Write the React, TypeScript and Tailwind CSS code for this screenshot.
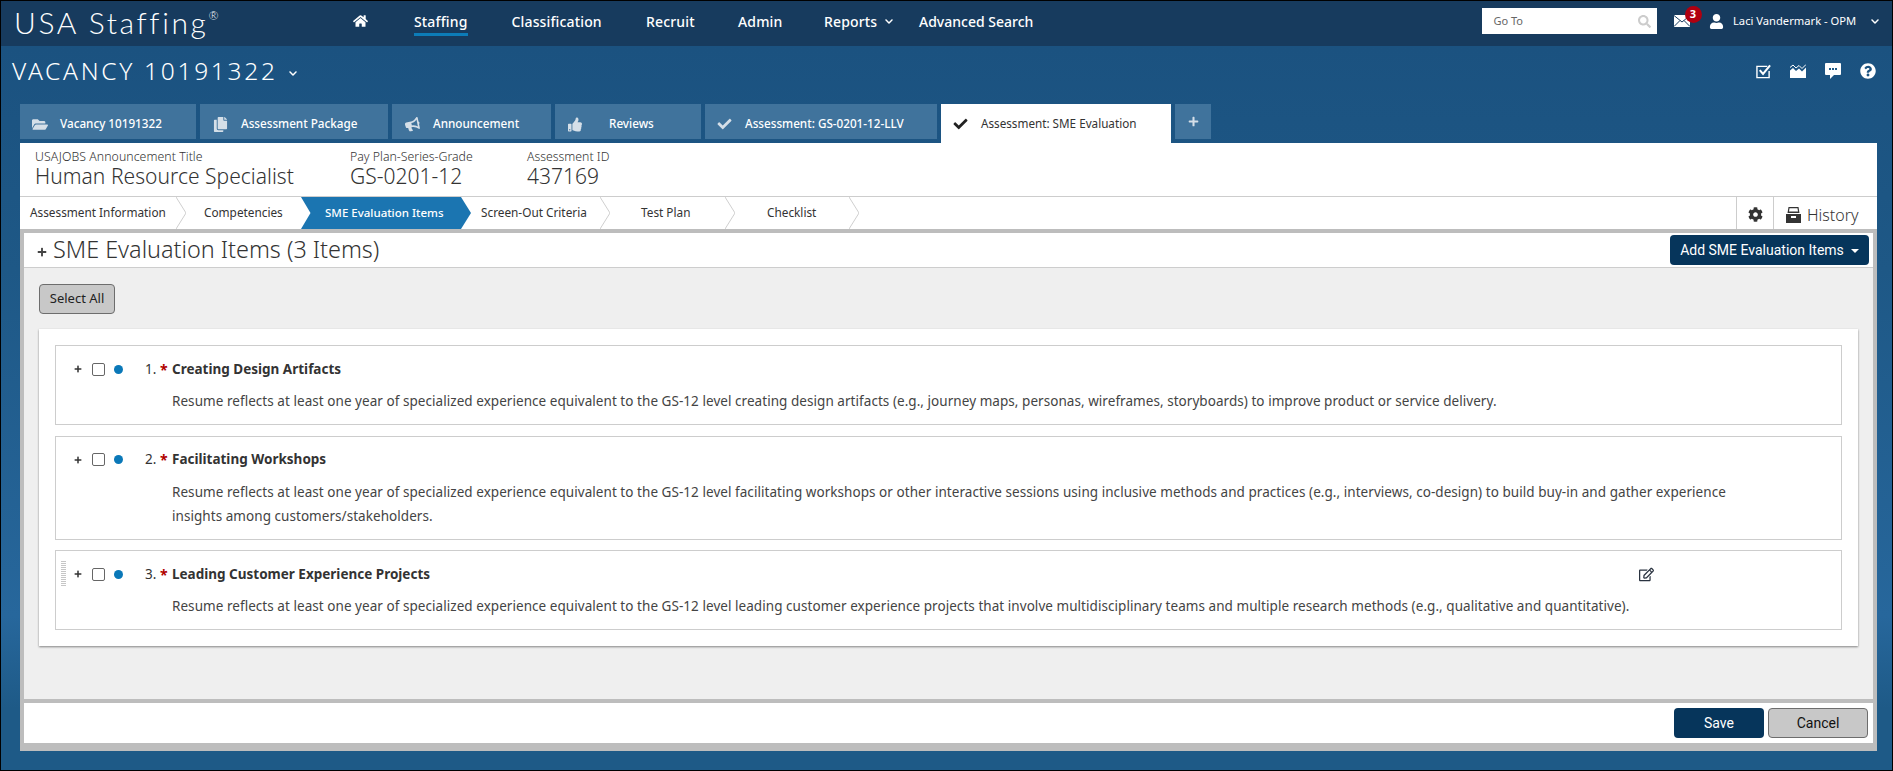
import type { ReactNode } from "react";
import {
  FaBullhorn,
  FaCheck,
  FaCog,
  FaCopy,
  FaFolderOpen,
  FaHome,
  FaPlus,
  FaQuestionCircle,
  FaRegEdit,
  FaSearch,
  FaThumbsUp,
  FaUser,
  FaChevronDown,
} from "react-icons/fa";

type Tab = {
  label: string;
  icon: ReactNode;
  width: string;
  iconBox: string;
  active?: boolean;
};

const tabs: Tab[] = [
  { label: "Vacancy 10191322", icon: <FaFolderOpen className="h-[15px] w-[16px]" />, width: "w-[176px]", iconBox: "w-[40px] pl-[12px]" },
  { label: "Assessment Package", icon: <FaCopy className="h-[15px] w-[15px]" />, width: "w-[188px]", iconBox: "w-[41px] pl-[13px]" },
  { label: "Announcement", icon: <FaBullhorn className="h-[13px] w-[15px] -rotate-12" />, width: "w-[159px]", iconBox: "w-[41px] pl-[13px]" },
  { label: "Reviews", icon: <FaThumbsUp className="h-[15px] w-[14px]" />, width: "w-[146px]", iconBox: "w-[54px] pl-[13px]" },
  { label: "Assessment: GS-0201-12-LLV", icon: <FaCheck className="h-[14px] w-[15px]" />, width: "w-[232px]", iconBox: "w-[40px] pl-[12px]" },
  { label: "Assessment: SME Evaluation", icon: <FaCheck className="h-[14px] w-[15px]" />, width: "w-[230px]", iconBox: "w-[40px] pl-[12px]", active: true },
];

const navItems = [
  { label: "Classification", width: "w-[134.5px]" },
  { label: "Recruit", width: "w-[92px]" },
  { label: "Admin", width: "w-[86px]" },
];

const smeItems = [
  {
    number: "1.",
    title: "Creating Design Artifacts",
    body: "Resume reflects at least one year of specialized experience equivalent to the GS-12 level creating design artifacts (e.g., journey maps, personas, wireframes, storyboards) to improve product or service delivery.",
  },
  {
    number: "2.",
    title: "Facilitating Workshops",
    body: "Resume reflects at least one year of specialized experience equivalent to the GS-12 level facilitating workshops or other interactive sessions using inclusive methods and practices (e.g., interviews, co-design) to build buy-in and gather experience insights among customers/stakeholders.",
  },
  {
    number: "3.",
    title: "Leading Customer Experience Projects",
    body: "Resume reflects at least one year of specialized experience equivalent to the GS-12 level leading customer experience projects that involve multidisciplinary teams and multiple research methods (e.g., qualitative and quantitative).",
    hovered: true,
  },
];

function Chevron() {
  return (
    <svg viewBox="0 0 10 32" className="absolute -right-[10px] top-0 h-[32px] w-[10px]" fill="none" stroke="#cfcfcf">
      <path d="M0 0 L10 16 L0 32" />
    </svg>
  );
}

function Step({ label, className, chevron = true }: { label: string; className: string; chevron?: boolean }) {
  return (
    <div className={`relative flex h-full shrink-0 items-center whitespace-nowrap text-[#333] ${className}`}>
      {label}
      {chevron && <Chevron />}
    </div>
  );
}

function SmeItem({ number, title, body, hovered }: { number: string; title: string; body: string; hovered?: boolean }) {
  return (
    <div className="relative border border-[#cdcdcd] pb-[11px] pt-[13px]">
      {hovered && (
        <div className="absolute left-[5px] top-[10px] h-[26px] w-[5px] bg-[linear-gradient(#c6c6c6_50%,transparent_50%)] bg-[length:100%_2px]" />
      )}
      <div className="flex h-[20px] items-center">
        <div className="flex w-[116px] shrink-0 items-center pl-[18px]">
          <FaPlus className="h-[8px] w-[8px] shrink-0 text-[#333]" />
          <span className="ml-[10px] h-[13px] w-[13px] shrink-0 rounded-[2px] border border-[#666] bg-white" />
          <span className="ml-[9px] h-[9px] w-[9px] shrink-0 rounded-full bg-[#0a78b8]" />
          <span className="ml-[22px] w-[15px] shrink-0 text-[13.5px] text-[#333]">{number}</span>
          <span className="w-[12px] shrink-0 text-[14px] font-bold text-[#b00000]">*</span>
        </div>
        <span className="text-[13.5px] font-bold text-[#333]">{title}</span>
        {hovered && <FaRegEdit className="ml-auto mr-[187px] h-[15px] w-[15px] text-[#2a3340]" />}
      </div>
      <p className="ml-[116px] mt-[10px] max-w-[1580px] text-[13.5px] leading-[24px] tracking-[0.05px] text-[#444]">{body}</p>
    </div>
  );
}

export default function App() {
  return (
    <div className="flex h-[771px] w-full flex-col overflow-hidden border border-black bg-[linear-gradient(#1b5280_6%,#1e5886_35%,#27679c_80%,#1e5a87_92%)] font-['Noto_Sans',sans-serif]">
      {/* top bar */}
      <header className="flex h-[45px] shrink-0 items-center bg-[#173b5e] pb-[5px] pr-[12px] text-white">
        <div className="mt-[2px] w-[352px] shrink-0 whitespace-nowrap pl-[13px] font-['Lato',sans-serif] text-[30px] font-light leading-none tracking-[2.6px]">
          USA Staffing
          <sup className="-top-[14px] text-[12px] tracking-normal">®</sup>
        </div>
        <FaHome className="mr-[46px] h-[14px] w-[15px] shrink-0" />
        <div className="relative w-[97.5px] shrink-0 text-[14px] font-medium tracking-[0.15px]">
          Staffing
          <span className="absolute -bottom-[4px] left-0 h-[3px] w-[54px] bg-[#0c7cb8]" />
        </div>
        {navItems.map((item) => (
          <div key={item.label} className={`shrink-0 text-[14px] font-medium tracking-[0.15px] ${item.width}`}>
            {item.label}
          </div>
        ))}
        <div className="flex w-[95px] shrink-0 items-center text-[14px] font-medium tracking-[0.15px]">
          Reports
          <FaChevronDown className="ml-[7px] h-[9px] w-[10px]" />
        </div>
        <div className="shrink-0 text-[14px] font-medium">Advanced Search</div>

        <div className="ml-auto flex h-[26px] w-[175px] shrink-0 items-center justify-between bg-white pl-[12px] pr-[6px] text-[11px] text-[#666]">
          Go To
          <FaSearch className="h-[13px] w-[13px] text-[#ccc]" />
        </div>
        <div className="relative ml-[17px] w-[35.5px] shrink-0">
          <svg viewBox="0 0 16 12" className="h-[12px] w-[16px]">
            <rect width="16" height="12" fill="#fff" />
            <path d="M0 .5 L8 7 L16 .5 M0 11.5 L6 5.5 M16 11.5 L10 5.5" fill="none" stroke="#173b5e" strokeWidth="1" />
          </svg>
          <span className="absolute -top-[9px] left-[11px] flex h-[17px] w-[17px] items-center justify-center rounded-full bg-[#b00010] text-[11px] font-bold">
            3
          </span>
        </div>
        <FaUser className="mr-[9px] h-[15px] w-[15px] shrink-0" />
        <div className="w-[137px] shrink-0 whitespace-nowrap text-[11.2px]">Laci Vandermark - OPM</div>
        <FaChevronDown className="h-[9px] w-[10px] shrink-0" />
      </header>

      {/* vacancy title */}
      <div className="flex h-[58px] shrink-0 items-start justify-between pl-[11px] pr-[16px] pt-[11px] text-white">
        <div className="flex h-[28px] items-center">
          <span className="text-[24.5px] font-light leading-[28px] tracking-[2.7px]">VACANCY 10191322</span>
          <FaChevronDown className="ml-[10px] mt-[5px] h-[9px] w-[10px]" />
        </div>
        <div className="flex h-[28px] items-center gap-[19px]">
          <svg viewBox="0 0 16 15" className="h-[15px] w-[15px]" fill="none" stroke="#fff">
            <path d="M14 7 V14 H1 V2 H12" strokeWidth="1.5" />
            <path d="M4 6 L7.5 10 L15 1" strokeWidth="2.2" />
          </svg>
          <svg viewBox="0 0 16 14" className="h-[14px] w-[16px]" fill="#fff">
            <path d="M0 14 V6.5 L3 4 L6 7 L9 4.5 L12 7.5 L16 3.5 V14 Z" />
            <path d="M0 3.5 L3 1 L6 4 L9 1.5 L12 4.5 L16 .5" fill="none" stroke="#fff" />
          </svg>
          <svg viewBox="0 0 16 16" className="h-[16px] w-[16px]">
            <path d="M1 0 H15 Q16 0 16 1 V11 Q16 12 15 12 H9 L5 16 V12 H1 Q0 12 0 11 V1 Q0 0 1 0 Z" fill="#fff" />
            <path d="M4 6 h2 M7 6 h2 M10 6 h2" stroke="#1e5a87" strokeWidth="2" />
          </svg>
          <FaQuestionCircle className="h-[16px] w-[16px]" />
        </div>
      </div>

      {/* tabs */}
      <div className="flex h-[39px] shrink-0 items-start gap-[4px] pl-[19px]">
        {tabs.map((tab) => (
          <div
            key={tab.label}
            className={`flex shrink-0 items-center pt-[5px] text-[11.7px] ${tab.width} ${
              tab.active ? "h-[39px] bg-white pb-[4px] text-[#333]" : "h-[35px] bg-[#40739c] font-medium text-white"
            }`}
          >
            <span className={`flex shrink-0 items-center ${tab.iconBox} ${tab.active ? "text-[#222]" : "text-[#d5dfe8]"}`}>
              {tab.icon}
            </span>
            {tab.label}
          </div>
        ))}
        <div className="flex h-[35px] w-[36px] shrink-0 items-center justify-center bg-[#40739c] text-[#d5dfe8]">
          <FaPlus className="h-[11px] w-[11px]" />
        </div>
      </div>

      {/* main panel */}
      <div className="ml-[19px] flex h-[608px] w-[1857px] shrink-0 flex-col bg-white">
        <div className="flex h-[54px] shrink-0 border-b border-[#cdcdcd] pl-[15px] pt-[6px] font-light text-[#333]">
          <div className="w-[315px] shrink-0">
            <div className="text-[12.3px] leading-[16px] tracking-[0.05px]">USAJOBS Announcement Title</div>
            <div className="text-[21px] leading-[22px] tracking-[0.03px]">Human Resource Specialist</div>
          </div>
          <div className="w-[177px] shrink-0">
            <div className="text-[12.3px] leading-[16px]">Pay Plan-Series-Grade</div>
            <div className="text-[21px] leading-[22px]">GS-0201-12</div>
          </div>
          <div>
            <div className="text-[12.3px] leading-[16px]">Assessment ID</div>
            <div className="text-[21px] leading-[22px]">437169</div>
          </div>
        </div>

        <div className="flex h-[32px] shrink-0 items-center text-[11.8px]">
          <Step label="Assessment Information" className="w-[156px] pl-[10px]" />
          <Step label="Competencies" className="w-[125px] pl-[28px]" chevron={false} />
          <Step
            label="SME Evaluation Items"
            className="w-[170px] bg-[#1b75b1] pl-[24px] text-[11.5px] font-medium !text-white [clip-path:polygon(0_0,160px_0,170px_50%,160px_100%,0_100%,9.5px_50%)]"
            chevron={false}
          />
          <Step label="Screen-Out Criteria" className="w-[129px] pl-[10px]" />
          <Step label="Test Plan" className="w-[125px] pl-[41px]" />
          <Step label="Checklist" className="w-[124px] pl-[42px]" />
          <div className="ml-auto flex h-full w-[37px] shrink-0 items-center justify-center border-l border-[#cdcdcd] pt-[3px]">
            <FaCog className="h-[15px] w-[15px] text-[#333]" />
          </div>
          <div className="flex h-full w-[104px] shrink-0 items-center border-l border-[#cdcdcd] pl-[12px] pt-[3px] text-[16px] font-light text-[#333]">
            <svg viewBox="0 0 15 16" className="mr-[6px] h-[16px] w-[15px]" fill="#333">
              <path d="M2.5 0 H12.5 L13.5 6 H1.5 Z M3.5 1.2 L3 4.5 H12 L11.5 1.2 Z" fillRule="evenodd" />
              <path d="M0 7 H15 V16 H0 Z M5 9 V11 H10 V9 Z" fillRule="evenodd" />
            </svg>
            History
          </div>
        </div>

        <div className="flex min-h-0 flex-1 flex-col gap-[4px] bg-[#bdbdbd] px-[4px] pb-[8px] pt-[4px]">
          <div className="flex min-h-0 flex-1 flex-col bg-[#efefef]">
            <div className="flex h-[35px] shrink-0 items-center border-b border-[#cdcdcd] bg-white pl-[13px] pr-[4px]">
              <FaPlus className="mr-[6px] mt-[4px] h-[10px] w-[10px] text-[#444]" />
              <span className="text-[23.4px] font-light leading-none text-[#333]">SME Evaluation Items (3 Items)</span>
              <button className="ml-auto flex h-[30px] w-[199px] items-center justify-center gap-[7px] rounded-[4px] bg-[#06355b] font-['Roboto',sans-serif] text-[14px] text-white">
                Add SME Evaluation Items
                <span className="mt-[1px] border-x-[4px] border-t-[4px] border-x-transparent border-t-white" />
              </button>
            </div>
            <div className="pl-[15px] pr-[15px] pt-[16px]">
              <button className="flex h-[30px] w-[76px] items-center justify-center rounded-[4px] border border-[#6d6d6d] bg-[#c8c8c8] text-[13px] text-[#222]">
                Select All
              </button>
              <div className="mt-[15px] flex w-[1819px] flex-col gap-[10.5px] bg-white px-[16px] pb-[16px] pt-[16px] shadow-[0_1px_2px_rgba(0,0,0,0.45)]">
                {smeItems.map((item) => (
                  <SmeItem key={item.number} {...item} />
                ))}
              </div>
            </div>
          </div>
          <div className="flex h-[40px] shrink-0 items-center justify-end gap-[4px] bg-white pr-[5px] font-['Roboto',sans-serif] text-[14px]">
            <button className="h-[30px] w-[90px] rounded-[4px] bg-[#06355b] text-white">Save</button>
            <button className="h-[30px] w-[100px] rounded-[4px] border border-[#6d6d6d] bg-[#c8c8c8] text-[#111]">Cancel</button>
          </div>
        </div>
      </div>
    </div>
  );
}
